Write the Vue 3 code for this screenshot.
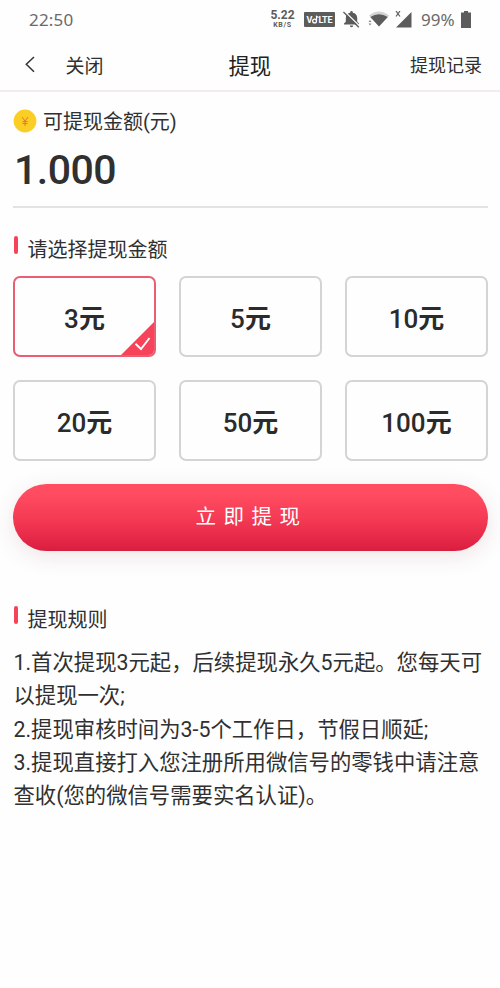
<script setup>
import { ref } from 'vue'

const amounts = [3, 5, 10, 20, 50, 100]
const selected = ref(3)
const rules = [
  '1.首次提现3元起，后续提现永久5元起。您每天可以提现一次;',
  '2.提现审核时间为3-5个工作日，节假日顺延;',
  '3.提现直接打入您注册所用微信号的零钱中请注意查收(您的微信号需要实名认证)。',
]
</script>

<template>
  <div class="page">
    <div class="status">
      <span class="time">22:50</span>
      <div class="speed"><b>5.22</b><small>KB/S</small></div>
      <svg class="volte" width="31" height="15" viewBox="0 0 31 15">
        <rect width="31" height="15" rx="1" fill="#5c5c5c" />
        <text x="2.5" y="11.2" textLength="7">V</text>
        <text x="14.5" y="11.2" textLength="14">LTE</text>
        <circle cx="10.6" cy="9" r="1.9" fill="none" stroke="#fff" stroke-width="1.3" />
        <path d="M12.5 9V4.2l2 1.2" fill="none" stroke="#fff" stroke-width="1.2" />
      </svg>
      <svg class="bell" width="17" height="17" viewBox="0 0 17 17">
        <path d="M1 13.500v-1l1.800-1.800V7c0-2.900 1.800-4.700 4.400-5.200V1.400a1.300 1.300 0 0 1 2.600 0v.4C12.500 2.300 14.200 4.100 14.200 7v3.700l1.800 1.800v1zM6.800 14.500h3.400a1.700 1.700 0 0 1-3.400 0z" fill="#5c5c5c" />
        <path d="M1.400 .2L16.800 15.200" stroke="#fefefe" stroke-width="1.300" />
        <path d="M.4 1L15.800 16.200" stroke="#5c5c5c" stroke-width="1.400" />
      </svg>
      <svg class="wifi" width="22" height="16" viewBox="0 0 22 16">
        <path d="M1 4.500Q11-3.500 21 4.500L11 15.500z" fill="#d4d4d4" />
        <path d="M2.300 6Q11 .3 19.800 6L11 15.500z" fill="#5c5c5c" />
        <path d="M.5 11l1.500-2 1.500 2zM.5 12.500h3L2 14.500z" fill="#8a8a8a" />
      </svg>
      <svg class="signal" width="17" height="17" viewBox="0 0 17 17">
        <path d="M16.500 1v15.500H1z" fill="#5c5c5c" />
        <path d="M1 0l4 5.500M5 0L1 5.500" stroke="#5c5c5c" stroke-width="1.200" />
      </svg>
      <span class="percent">99%</span>
      <svg class="battery" width="10" height="17" viewBox="0 0 10 17">
        <path d="M3 0h4v1.500h3V17H0V1.500h3z" fill="#5c5c5c" />
      </svg>
    </div>

    <header class="nav">
      <svg class="back" width="10" height="17" viewBox="0 0 10 17">
        <path d="M9 1L1.300 8.300L9 15.800" fill="none" stroke="#333" stroke-width="1.500" />
      </svg>
      <span class="close">关闭</span>
      <h1>提现</h1>
      <span class="history">提现记录</span>
    </header>

    <main>
      <section class="balance">
        <div class="label">
          <svg width="24" height="24" viewBox="0 0 24 24">
            <circle cx="12" cy="12" r="11.400" fill="#fbce25" />
            <path d="M9 8l3 4 3-4M12 12v5M9.500 12.500h5M9.500 14.500h5" fill="none" stroke="#ef713b" stroke-width="1" />
          </svg>
          <span>可提现金额(元)</span>
        </div>
        <div class="value">1.000</div>
      </section>

      <h2 class="choose">请选择提现金额</h2>
      <div class="grid">
        <button
          v-for="n in amounts"
          :key="n"
          class="option"
          :class="{ active: n === selected }"
          @click="selected = n"
        >
          {{ n }}<span class="unit">元</span>
          <svg v-if="n === selected" class="mark" width="35" height="35" viewBox="0 0 35 35">
            <path d="M35 0v35H0z" fill="#f7435a" />
            <path d="M15.500 22.700l5.500 5.300 8.500-11" fill="none" stroke="#fff" stroke-width="1.900" />
          </svg>
        </button>
      </div>

      <button class="submit">立即提现</button>

      <h2 class="rules-title">提现规则</h2>
      <div class="rules">
        <p v-for="rule in rules" :key="rule">{{ rule }}</p>
      </div>
    </main>
  </div>
</template>

<style>
body {
  background: #fefefe;
}
</style>

<style scoped>
.page {
  box-sizing: border-box;
  width: 500px;
  height: 988px;
  overflow: hidden;
  background: #fefefe;
  color: #303030;
  font-family: Roboto, "Noto Sans CJK SC", sans-serif;
}
.status {
  display: flex;
  align-items: center;
  height: 38px;
  padding-left: 29px;
  color: #6a6a6a;
  font-family: "Noto Sans", sans-serif;
}
.time {
  width: 242px;
  font-size: 17px;
  letter-spacing: 0.2px;
}
.speed {
  display: flex;
  flex-direction: column;
  align-items: center;
  width: 23px;
  color: #5c5c5c;
  font-family: Roboto, sans-serif;
}
.speed b {
  font-size: 12px;
  line-height: 11px;
}
.speed small {
  font-size: 7px;
  font-weight: 700;
  line-height: 8px;
  letter-spacing: 0.7px;
}
.volte {
  margin-left: 10px;
}
.volte text {
  fill: #fff;
  font: bold 9px Roboto, sans-serif;
}
.bell {
  margin-left: 8px;
}
.wifi {
  margin-left: 8px;
}
.signal {
  margin-left: 5px;
}
.percent {
  width: 40px;
  margin-left: 9px;
  font-size: 17px;
}
.nav {
  display: grid;
  grid-template-columns: 40.5px 163px 43px 1fr;
  align-items: center;
  box-sizing: border-box;
  height: 54px;
  padding: 0 18px 0 25px;
  border-bottom: 2px solid #f1eded;
}
.close {
  font-size: 19px;
}
.nav h1 {
  margin: 0;
  font-size: 21.3px;
  font-weight: 400;
  color: #222;
}
.history {
  text-align: right;
  font-size: 18px;
}
main {
  padding: 0 12px 0 13px;
}
.balance {
  box-sizing: border-box;
  height: 116px;
  padding-top: 14px;
  border-bottom: 2px solid #e3e3e3;
}
.label {
  display: flex;
  align-items: center;
  gap: 6px;
  height: 30px;
  font-size: 20px;
}
.label span {
  margin-top: -2px;
}
.value {
  margin-top: 10px;
  padding-left: 1px;
  font-size: 41px;
  font-weight: 500;
  line-height: 48px;
  letter-spacing: -0.5px;
}
h2 {
  display: flex;
  align-items: center;
  height: 28px;
  margin: 0;
  font-size: 20px;
  font-weight: 400;
}
h2::before {
  content: "";
  width: 4px;
  height: 18px;
  margin: -7px 10px 0 0.5px;
  border-radius: 2px;
  background: #f7435a;
}
.choose {
  margin-top: 26px;
}
.grid {
  display: grid;
  grid-template-columns: repeat(3, 1fr);
  grid-auto-rows: 81px;
  gap: 23px;
  margin-top: 14px;
}
.option {
  position: relative;
  padding: 0 0 1px;
  border: 2px solid #d4d4d4;
  border-radius: 7px;
  overflow: hidden;
  background: #fefefe;
  color: #2b2b2b;
  font: 500 26px Roboto, "Noto Sans CJK SC", sans-serif;
}
.unit {
  font-weight: 700;
}
.option.active {
  border-color: #ea5d72;
}
.mark {
  position: absolute;
  right: -1px;
  bottom: -1px;
}
.submit {
  display: block;
  width: 100%;
  height: 67px;
  margin-top: 23px;
  padding: 0 0 5px 2px;
  border: 0;
  border-radius: 34px;
  background: linear-gradient(#ff4c61 15%, #f53b55 50%, #e02243 92%, #d31f40);
  box-shadow: 0 5px 22px rgba(130, 50, 60, 0.13);
  color: #fff;
  font: 400 20.500px Roboto, "Noto Sans CJK SC", sans-serif;
  letter-spacing: 7.500px;
}
.rules-title {
  margin-top: 53px;
}
.rules {
  margin-top: 14px;
  padding-left: 0.5px;
  font-size: 21.350px;
  line-height: 33.300px;
}
.rules p {
  margin: 0 -6px 0 0;
}
</style>
